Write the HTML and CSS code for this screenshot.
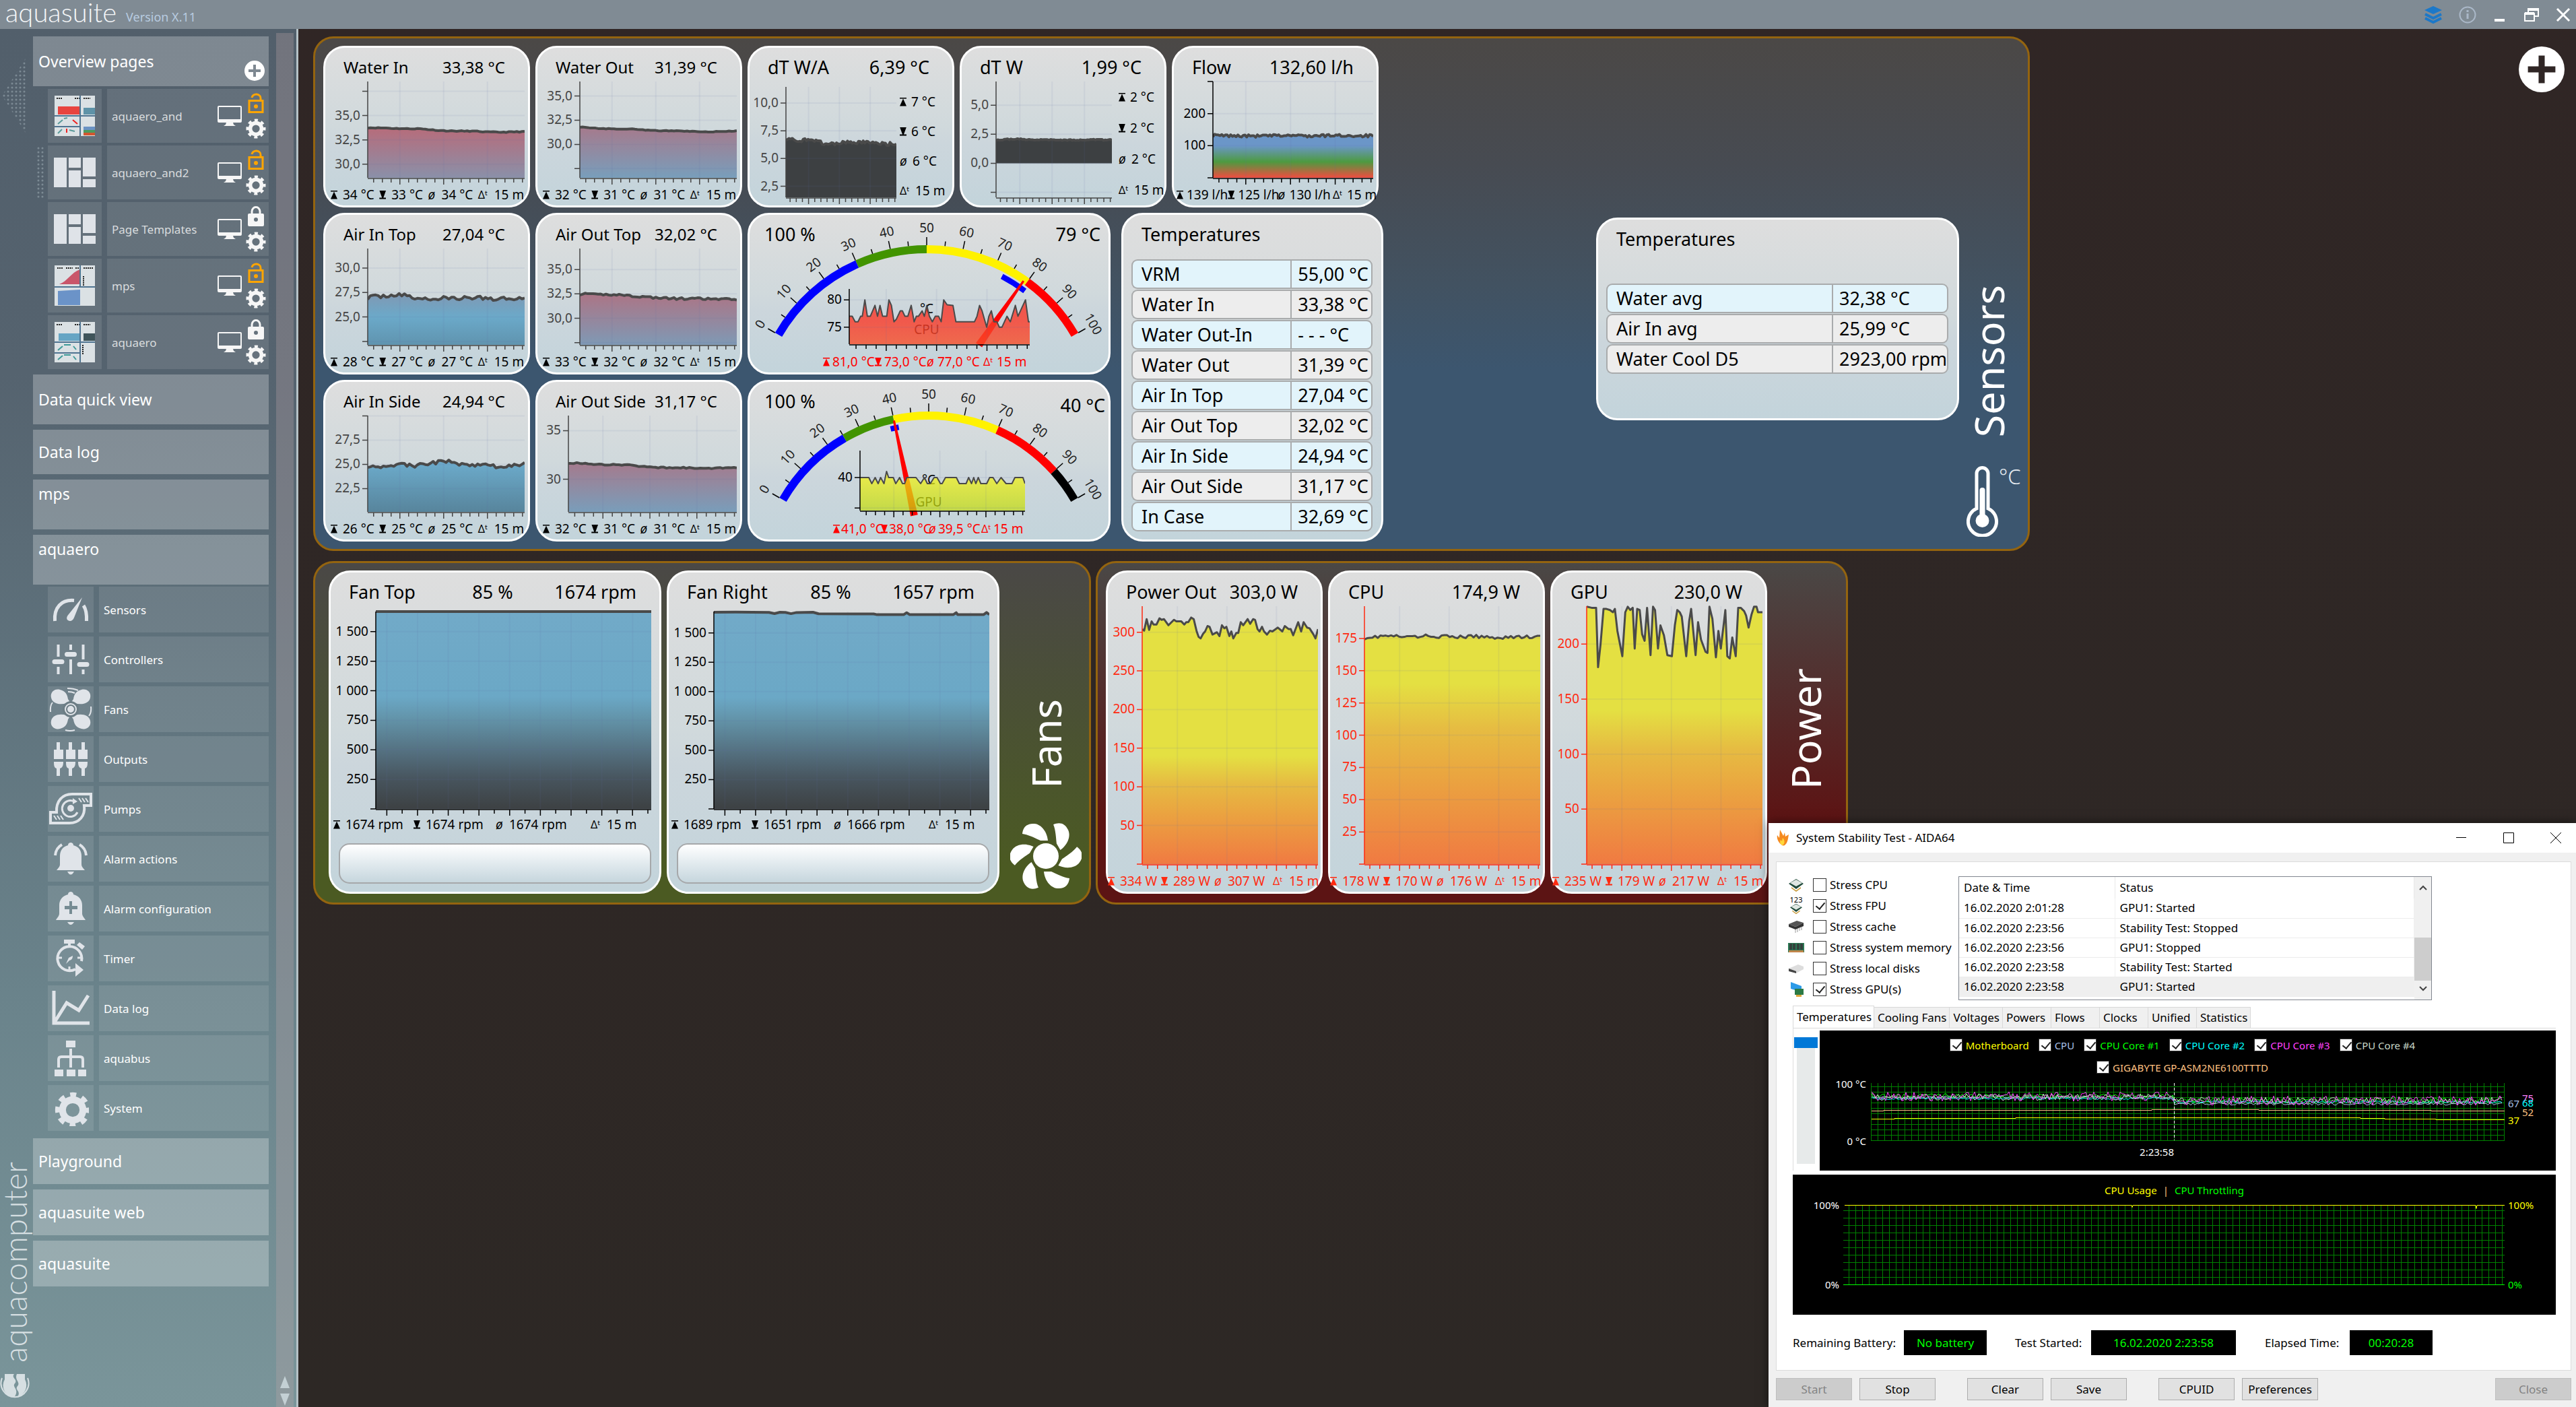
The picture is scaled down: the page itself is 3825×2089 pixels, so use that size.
FILE: index.html
```html
<!DOCTYPE html>
<html lang="en">
<head>
<meta charset="utf-8">
<title>aquasuite</title>
<link rel="stylesheet" href="styles.css">
</head>
<body>
<svg class="defs" aria-hidden="true">
  <defs>
    <pattern id="dots" width="6" height="6" patternUnits="userSpaceOnUse"><circle cx="3" cy="3" r="1.5" fill="#7c8a94"/></pattern>
    <symbol id="i-gear" viewBox="0 0 32 32"><circle cx="16" cy="16" r="9" fill="none" stroke="currentColor" stroke-width="6"/><circle cx="16" cy="16" r="13" fill="none" stroke="currentColor" stroke-width="5" stroke-dasharray="5.2 5.01" stroke-dashoffset="2.6"/></symbol>
    <symbol id="i-monitor" viewBox="0 0 36 30"><path fill="currentColor" fill-rule="evenodd" d="M2 0h32a2 2 0 0 1 2 2v21a2 2 0 0 1-2 2H2a2 2 0 0 1-2-2V2a2 2 0 0 1 2-2zm0 2v18h32V2zM13 25h10l1 3 3 2H9l3-2z"/></symbol>
    <symbol id="i-unlock" viewBox="0 0 24 30"><path fill="none" stroke="currentColor" stroke-width="3" d="M6 7a6.500 5.500 0 0 1 13 1v4M2 11.500h20v17H2z"/><circle cx="12" cy="20" r="3" fill="currentColor"/></symbol>
    <symbol id="i-lock" viewBox="0 0 24 30"><path fill="none" stroke="currentColor" stroke-width="3" d="M6 12V8a6 6.500 0 0 1 12 0v4"/><path fill="currentColor" fill-rule="evenodd" d="M2 11h20a2 2 0 0 1 2 2v15a2 2 0 0 1-2 2H2a2 2 0 0 1-2-2V13a2 2 0 0 1 2-2zm10 6a3 3 0 1 0 0 6 3 3 0 0 0 0-6z"/></symbol>
    <symbol id="i-plus" viewBox="0 0 30 30"><path fill="currentColor" fill-rule="evenodd" d="M15 0a15 15 0 1 0 0 30 15 15 0 0 0 0-30zm-2 6h4v7h7v4h-7v7h-4v-7H6v-4h7z"/></symbol>
    <symbol id="i-pages" viewBox="0 0 62 44"><path fill="#dfe3e8" d="M0 0h19v44H0zM22 0h18v15H22zM22 19h18v25H22zM43 0h19v28H43zM43 32h19v12H43z"/></symbol>
    <symbol id="i-chip" viewBox="0 0 24 22"><path fill="#c79a3a" d="M5 14l7 5 7-5v2l-7 5-7-5z"/><path fill="#1f4a3a" d="M12 2l11 7-11 8L1 9z"/><path fill="#dfe6e2" d="M12 3l9 5-9 5-9-5z"/></symbol>
  </defs>
</svg>

<header class="topbar">
  <span class="logo">aquasuite</span>
  <span class="version">Version X.11</span>
  <div class="top-icons">
    <button type="button" aria-label="Layers"><svg width="28" height="28" viewBox="0 0 28 28"><path fill="#1c78c8" d="M14 1l13 6-13 6L1 7z"/><path fill="none" stroke="#1c78c8" stroke-width="4" d="M2 13l12 6 12-6M2 19l12 6 12-6"/></svg></button>
    <button type="button" aria-label="Information"><svg width="26" height="26" viewBox="0 0 26 26"><circle cx="13" cy="13" r="11.500" fill="none" stroke="#aab8c8" stroke-width="2"/><path stroke="#aab8c8" stroke-width="3" d="M13 11v8M13 6v3"/></svg></button>
    <button type="button" aria-label="Minimize"><svg width="22" height="22" viewBox="0 0 22 22"><path stroke="#fff" stroke-width="4" d="M3 19h15"/></svg></button>
    <button type="button" aria-label="Restore"><svg width="24" height="22" viewBox="0 0 24 22"><path fill="none" stroke="#fff" stroke-width="2" d="M2 9h14v11H2zM7 8V2h15v11h-5"/><path stroke="#fff" stroke-width="4" d="M2 9h14M7 3h15"/></svg></button>
    <button type="button" aria-label="Close"><svg width="22" height="22" viewBox="0 0 22 22"><path stroke="#fff" stroke-width="3" d="M2 2l18 18M20 2L2 20"/></svg></button>
  </div>
</header>

<div class="shell">
  <aside class="sidebar">
    <div class="rail">
      <svg class="rail-arrow" width="36" height="114" viewBox="0 0 36 114"><path fill="url(#dots)" d="M36 0v114L0 57z"/></svg>
      <div class="brand">
        <span class="brand-name">aquacomputer</span>
        <svg width="44" height="44" viewBox="0 0 44 44"><path fill="none" stroke="#d6dfe2" stroke-width="2" d="M3 10a20.500 20.500 0 1 0 38 0"/><path fill="#d6dfe2" d="M7 4h14c-5 6 6 8 1 14s8 8-1 21A18 18 0 0 1 7 12zM25 4h12v8a18 18 0 0 1-11 26c6-9-5-10 0-16s-5-9-1-18z"/></svg>
      </div>
    </div>
    <nav class="nav">
      <section>
        <h2 class="nav-head">Overview pages<button type="button" class="add" aria-label="Add page"><svg width="30" height="30"><use href="#i-plus"/></svg></button></h2>
        <ul class="pages">
          <li><span class="thumb"><svg width="60" height="60" viewBox="0 0 60 60"><path fill="#dbe1e4" d="M0 0h60v60H0z"/><path fill="#e8443f" d="M5 16h33v12H5z"/><path fill="#5f93a8" d="M43 18h17v10H43z"/><path fill="#6b93c4" d="M43 46h17v5H43z"/><path fill="#4d9a5f" d="M43 51h17v4H43z"/><path fill="#d2562f" d="M43 55h17v4H43z"/><path fill="none" stroke="#4f7491" stroke-width="2" d="M38 0v60M0 30h60M0 46h38"/><path fill="none" stroke="#e22" stroke-width="2" d="M27 36l7 6M18 49v6"/><path fill="none" stroke="#5a9a9a" stroke-width="2" d="M5 42l7-6M5 56l6-6M14 34l5-1M22 51l8 2"/><path fill="none" stroke="#222" stroke-width="2" stroke-dasharray="2 1" d="M3 4h9M30 4h7M43 4h10"/></svg></span><a href="#" class="page">aquaero_and</a><span class="tools"><svg class="mon" width="36" height="30"><use href="#i-monitor"/></svg><span class="stack"><svg class="open" width="24" height="30"><use href="#i-unlock"/></svg><svg width="30" height="30"><use href="#i-gear"/></svg></span></span></li>
          <li><svg class="grip" width="12" height="78"><rect width="12" height="78" fill="url(#dots)"/></svg><span class="thumb"><svg width="62" height="44"><use href="#i-pages"/></svg></span><a href="#" class="page">aquaero_and2</a><span class="tools"><svg class="mon" width="36" height="30"><use href="#i-monitor"/></svg><span class="stack"><svg class="open" width="24" height="30"><use href="#i-unlock"/></svg><svg width="30" height="30"><use href="#i-gear"/></svg></span></span></li>
          <li><span class="thumb"><svg width="62" height="44"><use href="#i-pages"/></svg></span><a href="#" class="page">Page Templates</a><span class="tools"><svg class="mon" width="36" height="30"><use href="#i-monitor"/></svg><span class="stack"><svg width="24" height="30"><use href="#i-lock"/></svg><svg width="30" height="30"><use href="#i-gear"/></svg></span></span></li>
          <li><span class="thumb"><svg width="60" height="60" viewBox="0 0 60 60"><path fill="#dbe1e4" d="M0 0h60v60H0z"/><path fill="#c9566a" d="M7 28c12-4 18-18 31-22v22z"/><path fill="#6b93c8" d="M5 38l33-2v23H5z"/><path fill="none" stroke="#4f7491" stroke-width="2" d="M38 0v32M0 32h60"/><path fill="none" stroke="#222" stroke-width="2" stroke-dasharray="2 1" d="M4 4h9M17 4h10M31 4h5M43 4h14M43 16v14"/></svg></span><a href="#" class="page">mps</a><span class="tools"><svg class="mon" width="36" height="30"><use href="#i-monitor"/></svg><span class="stack"><svg class="open" width="24" height="30"><use href="#i-unlock"/></svg><svg width="30" height="30"><use href="#i-gear"/></svg></span></span></li>
          <li><span class="thumb"><svg width="60" height="60" viewBox="0 0 60 60"><path fill="#dbe1e4" d="M0 0h60v60H0z"/><path fill="#66a5c4" d="M6 17h31v11H6z"/><path fill="#3f545a" d="M43 17h17v11H43z"/><path fill="none" stroke="#4f7491" stroke-width="2" d="M38 0v60M0 30h60M0 46h38"/><path fill="none" stroke="#3f9a98" stroke-width="2" d="M5 42l7-6M14 34h10M28 36l4 5M5 56l7-6M14 49h10M28 51l4 5"/><path fill="none" stroke="#222" stroke-width="2" stroke-dasharray="2 1" d="M3 4h9M30 4h7M43 4h10M42 34v14"/></svg></span><a href="#" class="page">aquaero</a><span class="tools"><svg class="mon" width="36" height="30"><use href="#i-monitor"/></svg><span class="stack"><svg width="24" height="30"><use href="#i-lock"/></svg><svg width="30" height="30"><use href="#i-gear"/></svg></span></span></li>
        </ul>
      </section>
      <h2 class="nav-head">Data quick view</h2>
      <h2 class="nav-head short">Data log</h2>
      <h2 class="nav-head top">mps</h2>
      <section>
        <h2 class="nav-head top">aquaero</h2>
        <ul class="items">
          <li><svg viewBox="0 0 68 68"><path fill="none" stroke="currentColor" stroke-width="5" d="M10.500 51C9 31 20 19 39 20.500M53 28c4 6 5 13 4.500 23"/><path fill="currentColor" d="M51 16L39 46c-2 5-6 6-9 4s-2-6 1-9z"/></svg><a href="#">Sensors</a></li>
          <li><svg viewBox="0 0 68 68"><path fill="none" stroke="currentColor" stroke-width="4" d="M15.500 12v18M15.500 45v11M34 12v8M34 34v22M52.500 12v22M52.500 49v7"/><path stroke="currentColor" stroke-width="7" stroke-linecap="round" d="M10 37.500h11M28.500 26.500h11M47 41.500h11"/></svg><a href="#">Controllers</a></li>
          <li><svg viewBox="0 0 68 68"><g fill="currentColor"><path d="M34 34L28 25C18 28 7 26 5 17 3 8 11 3 18 5c9 2 11 8 12 14l6 9z"/><path d="M34 34l6-9c10 3 21 1 23-8 2-9-6-14-13-12-9 2-11 8-12 14l-6 9z"/><path d="M34 34l-6 9c-10-3-21-1-23 8-2 9 6 14 13 12 9-2 11-8 12-14l6-9z"/><path d="M34 34l6 9c10-3 21-1 23 8 2 9-6 14-13 12-9-2-11-8-12-14l-6-9z"/></g><circle cx="34" cy="34" r="12" fill="#6c7d85"/><circle cx="34" cy="34" r="8" fill="none" stroke="currentColor" stroke-width="2"/><circle cx="34" cy="34" r="5" fill="currentColor"/><path fill="none" stroke="currentColor" stroke-width="2" d="M29 3q9 0 16 3M30 8q6 0 10 2M26 65q7 2 14 0M4 38q-1-9 3-14M64 30q1 9-3 14"/></svg><a href="#">Fans</a></li>
          <li><svg viewBox="0 0 68 68"><path fill="currentColor" d="M13 9h5v11h5v14H9V20h4zM31 9h5v11h5v14H27V20h4zM50 9h5v11h4v14H45V20h5zM9 38h14c0 7-2 9-5 10v11h-5V48c-3-1-4-3-4-10zM27 38h14c0 7-2 9-5 10v11h-5V48c-3-1-4-3-4-10zM45 38h14c0 7-1 9-4 10v11h-5V48c-3-1-5-3-5-10z"/></svg><a href="#">Outputs</a></li>
          <li><svg viewBox="0 0 68 68"><path fill="none" stroke="currentColor" stroke-width="4" d="M4 55V39h9C12 22 22 12 36 12h28v17H54C56 45 46 55 32 55z"/><path fill="none" stroke="currentColor" stroke-width="3" d="M44 39a12 12 0 1 1-5-16"/><path fill="currentColor" d="M37 18l7 5-7 4z"/><circle cx="34" cy="33" r="5" fill="currentColor"/><path stroke="currentColor" stroke-width="2" d="M46 18l4 6M51 18l4 6M56 18l4 6M9 44l4 6M14 44l4 6M19 44l4 6"/></svg><a href="#">Pumps</a></li>
          <li><svg viewBox="0 0 68 68"><path fill="currentColor" d="M34 10c2 0 4 1 4 4 8 2 12 8 12 16v12c0 4 2 5 5 9H13c3-4 5-5 5-9V30c0-8 4-14 12-16 0-3 2-4 4-4zM29 53h10q-5 9-10 0z"/><path fill="none" stroke="currentColor" stroke-width="4" d="M11 29q1-11 10-16M57 29q-1-11-10-16"/></svg><a href="#">Alarm actions</a></li>
          <li><svg viewBox="0 0 68 68"><path fill="currentColor" fill-rule="evenodd" d="M34 9c2 0 4 1 4 4 8 2 13 8 13 16v12c0 4 2 5 5 10H12c3-5 5-6 5-10V29c0-8 5-14 13-16 0-3 2-4 4-4zm-2 14v7h-7v5h7v7h4v-7h8v-5h-8v-7zM29 54h10q-5 8-10 0z"/></svg><a href="#">Alarm configuration</a></li>
          <li><svg viewBox="0 0 68 68"><path fill="none" stroke="currentColor" stroke-width="4" d="M41 50A18 18 0 1 1 50 38"/><path fill="currentColor" d="M24 6h16v6h-6v6h-4v-6h-6zM43 14l4-4 8 6-4 5zM41 41l12 10-12 10zM27 42l4-9 6-3q0 6-5 7z"/><path stroke="currentColor" stroke-width="3" d="M15 33h6M44 33h6M32 46v5"/></svg><a href="#">Timer</a></li>
          <li><svg viewBox="0 0 68 68"><path fill="none" stroke="currentColor" stroke-width="5" d="M9 8v48h53M11 53l17-27 18 11 14-22"/></svg><a href="#">Data log</a></li>
          <li><svg viewBox="0 0 68 68"><path fill="currentColor" d="M27 8h14v10H27zM10 51h13v10H10zM28 51h13v10H28zM45 51h12v10H45z"/><path fill="none" stroke="currentColor" stroke-width="4" d="M34 20v28M16 48V36q0-4 4-4h28q4 0 4 4v12"/></svg><a href="#">aquabus</a></li>
          <li><svg viewBox="-2 -2 36 36" class="gear"><use href="#i-gear"/></svg><a href="#">System</a></li>
        </ul>
      </section>
      <h2 class="nav-head low">Playground</h2>
      <h2 class="nav-head low">aquasuite web</h2>
      <h2 class="nav-head low">aquasuite</h2>
    </nav>
    <div class="scroller"><svg width="14" height="44" viewBox="0 0 14 44"><path fill="#c3d0d4" d="M7 0l7 18H0zM0 26h14L7 44z"/></svg></div>
  </aside>

  <main class="board">
    <button type="button" class="add-big" aria-label="Add element"><svg width="68" height="68"><use href="#i-plus"/></svg></button>

    <div class="row row-one">
      <section class="panel sensors">
        <div class="pairs">
          <article class="card"><header><h3>Water In</h3><b>33,38 °C</b></header><div class="chart" data-chart="waterIn"></div><ul class="stats"><li class="max">34 °C</li><li class="min">33 °C</li><li class="avg">34 °C</li><li class="dt">15 m</li></ul></article>
          <article class="card"><header><h3>Water Out</h3><b>31,39 °C</b></header><div class="chart" data-chart="waterOut"></div><ul class="stats"><li class="max">32 °C</li><li class="min">31 °C</li><li class="avg">31 °C</li><li class="dt">15 m</li></ul></article>
          <article class="card"><header><h3>Air In Top</h3><b>27,04 °C</b></header><div class="chart" data-chart="airInTop"></div><ul class="stats"><li class="max">28 °C</li><li class="min">27 °C</li><li class="avg">27 °C</li><li class="dt">15 m</li></ul></article>
          <article class="card"><header><h3>Air Out Top</h3><b>32,02 °C</b></header><div class="chart" data-chart="airOutTop"></div><ul class="stats"><li class="max">33 °C</li><li class="min">32 °C</li><li class="avg">32 °C</li><li class="dt">15 m</li></ul></article>
          <article class="card"><header><h3>Air In Side</h3><b>24,94 °C</b></header><div class="chart" data-chart="airInSide"></div><ul class="stats"><li class="max">26 °C</li><li class="min">25 °C</li><li class="avg">25 °C</li><li class="dt">15 m</li></ul></article>
          <article class="card"><header><h3>Air Out Side</h3><b>31,17 °C</b></header><div class="chart" data-chart="airOutSide"></div><ul class="stats"><li class="max">32 °C</li><li class="min">31 °C</li><li class="avg">31 °C</li><li class="dt">15 m</li></ul></article>
        </div>
        <div class="center">
          <div class="trio">
            <article class="card big"><header><h3>dT W/A</h3><b>6,39 °C</b></header><div class="split"><div class="chart" data-chart="dtWA"></div><ul class="stats side wide"><li class="max">7 °C</li><li class="min">6 °C</li><li class="avg">6 °C</li><li class="dt">15 m</li></ul></div></article>
            <article class="card big"><header><h3>dT W</h3><b>1,99 °C</b></header><div class="split"><div class="chart" data-chart="dtW"></div><ul class="stats side"><li class="max">2 °C</li><li class="min">2 °C</li><li class="avg">2 °C</li><li class="dt">15 m</li></ul></div></article>
            <article class="card big"><header><h3>Flow</h3><b>132,60 l/h</b></header><div class="chart" data-chart="flow"></div><ul class="stats tight"><li class="max">139 l/h</li><li class="min">125 l/h</li><li class="avg">130 l/h</li><li class="dt">15 m</li></ul></article>
          </div>
          <div class="lower">
            <div class="gauges">
              <article class="card big gauge"><header><b>100 %</b><b>79 °C</b></header><div class="dial" data-gauge="cpu"></div><ul class="stats red"><li class="max">81,0 °C</li><li class="min">73,0 °C</li><li class="avg">77,0 °C</li><li class="dt">15 m</li></ul></article>
              <article class="card big gauge second"><header><b>100 %</b><b class="reading">40 °C</b></header><div class="dial" data-gauge="gpu"></div><ul class="stats red narrow"><li class="max">41,0 °C</li><li class="min">38,0 °C</li><li class="avg">39,5 °C</li><li class="dt">15 m</li></ul></article>
            </div>
            <article class="card big"><header><h3>Temperatures</h3></header>
              <table class="temps">
                <tr class="hl"><th scope="row">VRM</th><td>55,00 °C</td></tr>
                <tr><th scope="row">Water In</th><td>33,38 °C</td></tr>
                <tr class="hl"><th scope="row">Water Out-In</th><td>- - - °C</td></tr>
                <tr><th scope="row">Water Out</th><td>31,39 °C</td></tr>
                <tr class="hl"><th scope="row">Air In Top</th><td>27,04 °C</td></tr>
                <tr><th scope="row">Air Out Top</th><td>32,02 °C</td></tr>
                <tr class="hl"><th scope="row">Air In Side</th><td>24,94 °C</td></tr>
                <tr><th scope="row">Air Out Side</th><td>31,17 °C</td></tr>
                <tr class="hl"><th scope="row">In Case</th><td>32,69 °C</td></tr>
              </table>
            </article>
          </div>
        </div>
        <article class="card big averages"><header><h3>Temperatures</h3></header>
          <table class="temps">
            <tr class="hl"><th scope="row">Water avg</th><td>32,38 °C</td></tr>
            <tr><th scope="row">Air In avg</th><td>25,99 °C</td></tr>
            <tr><th scope="row">Water Cool D5</th><td>2923,00 rpm</td></tr>
          </table>
        </article>
        <div class="label-col">
          <h2>Sensors</h2>
          <div class="thermo"><svg width="48" height="106" viewBox="0 0 48 106"><path fill="none" stroke="#fff" stroke-width="5" d="M15 64V12a8.500 8.500 0 0 1 17 0v52a21 21 0 1 1-17 0z"/><path stroke="#fff" stroke-width="8" stroke-linecap="round" d="M23.500 37v42"/><circle cx="23.500" cy="82" r="10" fill="#fff"/></svg><span>°C</span></div>
        </div>
      </section>
    </div>

    <div class="row row-two">
      <section class="panel fans">
        <article class="card big"><header class="three"><h3>Fan Top</h3><b>85 %</b><b>1674 rpm</b></header><div class="chart" data-chart="fanTop"></div><ul class="stats rpm"><li class="max">1674 rpm</li><li class="min">1674 rpm</li><li class="avg">1674 rpm</li><li class="dt">15 m</li></ul><div class="readout"></div></article>
        <article class="card big"><header class="three"><h3>Fan Right</h3><b>85 %</b><b>1657 rpm</b></header><div class="chart" data-chart="fanRight"></div><ul class="stats rpm"><li class="max">1689 rpm</li><li class="min">1651 rpm</li><li class="avg">1666 rpm</li><li class="dt">15 m</li></ul><div class="readout"></div></article>
        <div class="label-col">
          <h2>Fans</h2>
          <svg width="106" height="98" viewBox="-53 -49 106 98" fill="#fff"><circle r="19"/><path id="blade" d="M-8-23C-15-26-26-32-35-33-34-43-28-49-17-48-6-47 2-35 3-23z"/><use href="#blade" transform="rotate(60)"/><use href="#blade" transform="rotate(120)"/><use href="#blade" transform="rotate(180)"/><use href="#blade" transform="rotate(240)"/><use href="#blade" transform="rotate(300)"/></svg>
        </div>
      </section>
      <section class="panel power">
        <article class="card big"><header><h3>Power Out</h3><b>303,0 W</b></header><div class="chart" data-chart="powerOut"></div><ul class="stats watt"><li class="max">334 W</li><li class="min">289 W</li><li class="avg">307 W</li><li class="dt">15 m</li></ul></article>
        <article class="card big"><header><h3>CPU</h3><b>174,9 W</b></header><div class="chart" data-chart="powerCpu"></div><ul class="stats watt"><li class="max">178 W</li><li class="min">170 W</li><li class="avg">176 W</li><li class="dt">15 m</li></ul></article>
        <article class="card big"><header><h3>GPU</h3><b>230,0 W</b></header><div class="chart" data-chart="powerGpu"></div><ul class="stats watt"><li class="max">235 W</li><li class="min">179 W</li><li class="avg">217 W</li><li class="dt">15 m</li></ul></article>
        <div class="label-col"><h2>Power</h2></div>
      </section>
    </div>
  </main>
</div>

<div class="window" role="dialog" aria-label="System Stability Test">
  <div class="titlebar">
    <svg width="20" height="24" viewBox="0 0 20 24"><path fill="#f58a1f" d="M5 0c3 5 4 7 5 9l2-5 1 6 5-3c-1 5-1 11-5 15q-3 3-6 0C2 18 0 13 1 8l3 4z"/><path fill="#ffd83a" d="M9 12c3 3 4 8 0 11-5-2-4-6-3-8l2 2z"/></svg>
    <span>System Stability Test - AIDA64</span>
    <div class="win-controls">
      <button type="button" aria-label="Minimize"><svg width="16" height="16"><path stroke="#000" d="M0 7.500h15"/></svg></button>
      <button type="button" aria-label="Maximize"><svg width="16" height="16"><path fill="none" stroke="#000" d="M.5.5h15v15H.5z"/></svg></button>
      <button type="button" aria-label="Close window"><svg width="16" height="16"><path stroke="#000" d="M0 0l16 16M16 0L0 16"/></svg></button>
    </div>
  </div>
  <div class="win-body">
    <div class="sheet">
      <div class="upper">
        <ul class="stress">
          <li><svg width="24" height="22"><use href="#i-chip"/></svg><input type="checkbox" id="s1"><label for="s1">Stress CPU</label></li>
          <li><span class="fpu"><small>123</small><svg width="24" height="18"><use href="#i-chip"/></svg></span><input type="checkbox" id="s2" checked><label for="s2">Stress FPU</label></li>
          <li><svg width="24" height="22" viewBox="0 0 24 22"><path fill="#555" d="M1 7l12-5 10 3-12 6z"/><path fill="#333" d="M1 7l10 4 12-6v5l-12 5-10-4z"/><path stroke="#999" d="M11 15v5M14 14v5M17 12v5M20 11v5"/></svg><input type="checkbox" id="s3"><label for="s3">Stress cache</label></li>
          <li><svg width="24" height="22" viewBox="0 0 24 22"><path fill="#2c7a55" d="M0 4h24v14H0z"/><path fill="#c0854a" d="M1 15h22v3H1z"/><path fill="#33413c" d="M2 5h4v9H2zM7 5h4v9H7zM13 5h4v9h-4zM18 5h4v9h-4z"/></svg><input type="checkbox" id="s4"><label for="s4">Stress system memory</label></li>
          <li><svg width="24" height="22" viewBox="0 0 24 22"><path fill="#ddd" d="M1 11l14-6 8 3v4l-11 6z"/><path fill="#444" d="M1 11l11 4v3L1 15z"/></svg><input type="checkbox" id="s5"><label for="s5">Stress local disks</label></li>
          <li><svg width="24" height="22" viewBox="0 0 24 22"><path fill="#2d9be8" d="M4 0l16 6v9L4 10z"/><path fill="#2c7a45" d="M10 10h13v9H10z"/><path fill="#e0a83a" d="M12 19h8v3h-8z"/></svg><input type="checkbox" id="s6" checked><label for="s6">Stress GPU(s)</label></li>
        </ul>
        <div class="log">
          <table>
            <thead><tr><th>Date &amp; Time</th><th>Status</th></tr></thead>
            <tbody>
              <tr><td>16.02.2020 2:01:28</td><td>GPU1: Started</td></tr>
              <tr><td>16.02.2020 2:23:56</td><td>Stability Test: Stopped</td></tr>
              <tr><td>16.02.2020 2:23:56</td><td>GPU1: Stopped</td></tr>
              <tr><td>16.02.2020 2:23:58</td><td>Stability Test: Started</td></tr>
              <tr class="sel"><td>16.02.2020 2:23:58</td><td>GPU1: Started</td></tr>
            </tbody>
          </table>
          <div class="bar"><svg width="12" height="8"><path fill="none" stroke="#444" stroke-width="2" d="M1 7l5-5 5 5"/></svg><i></i><svg width="12" height="8"><path fill="none" stroke="#444" stroke-width="2" d="M1 1l5 5 5-5"/></svg></div>
        </div>
      </div>
      <div class="tabs" role="tablist">
        <button type="button" role="tab" aria-selected="true">Temperatures</button><button type="button" role="tab">Cooling Fans</button><button type="button" role="tab">Voltages</button><button type="button" role="tab">Powers</button><button type="button" role="tab">Flows</button><button type="button" role="tab">Clocks</button><button type="button" role="tab">Unified</button><button type="button" role="tab">Statistics</button>
      </div>
      <div class="tab-page">
        <input type="range" class="vslider" min="0" max="100" value="0" aria-label="Scale">
        <div class="scope" data-scope="temps">
          <div class="legend">
            <label class="c-mb"><input type="checkbox" checked>Motherboard</label>
            <label class="c-cpu"><input type="checkbox" checked>CPU</label>
            <label class="c-1"><input type="checkbox" checked>CPU Core #1</label>
            <label class="c-2"><input type="checkbox" checked>CPU Core #2</label>
            <label class="c-3"><input type="checkbox" checked>CPU Core #3</label>
            <label class="c-4"><input type="checkbox" checked>CPU Core #4</label>
          </div>
          <div class="legend"><label class="c-ssd"><input type="checkbox" checked>GIGABYTE GP-ASM2NE6100TTTD</label></div>
        </div>
      </div>
      <div class="scope usage" data-scope="usage">
        <p><span class="c-mb">CPU Usage</span><span class="c-ssd">|</span><span class="c-thr">CPU Throttling</span></p>
      </div>
      <div class="status">
        <span>Remaining Battery:</span><output>No battery</output>
        <span>Test Started:</span><output class="long">16.02.2020 2:23:58</output>
        <span>Elapsed Time:</span><output>00:20:28</output>
      </div>
    </div>
    <div class="buttons">
      <button type="button" disabled>Start</button><button type="button">Stop</button><button type="button" class="sep">Clear</button><button type="button">Save</button><button type="button" class="sep">CPUID</button><button type="button">Preferences</button><button type="button" class="end" disabled>Close</button>
    </div>
  </div>
</div>
<script src="charts.js"></script>
</body>
</html>
```
FILE: styles.css
```css
* { box-sizing: border-box; }
html, body { margin: 0; }
body {
  position: relative;
  display: flex;
  flex-direction: column;
  min-height: 100vh;
  overflow: hidden;
  background: linear-gradient(#302625, #2d2825);
  font-family: "Noto Sans", "Open Sans", sans-serif;
  color: #fff;
}
h2, h3, p, ul { margin: 0; padding: 0; font-weight: 400; }
ul { list-style: none; }
b { font-weight: 400; }
a { color: inherit; text-decoration: none; }
svg { display: block; }
button { padding: 0; border: 0; background: none; color: inherit; font: inherit; }
.defs { position: absolute; width: 0; height: 0; }

/* Title bar */
.topbar { display: flex; align-items: center; height: 43px; padding: 0 8px; background: #808b94; }
.logo { margin-bottom: 8px; font: 300 40px/40px Lato, sans-serif; color: #f4f6f8; }
.version { margin: 6px 0 0 14px; font-size: 18px; color: #b8cbe0; }
.top-icons { display: flex; align-items: center; gap: 24px; margin-left: auto; }

/* Sidebar */
.shell { display: flex; flex: 1; }
.sidebar { display: flex; width: 443px; border-right: 3px solid #b6c2c7; background: linear-gradient(#525f6b, #55636f 25%, #6a838b 70%, #7a959a); }
.rail { display: flex; flex-direction: column; justify-content: space-between; width: 49px; padding: 42px 0 9px; }
.rail-arrow { margin-left: 3px; }
.brand { display: flex; flex-direction: column; align-items: center; gap: 13px; width: 44px; }
.brand-name { writing-mode: vertical-rl; transform: rotate(180deg); font: 300 48px/44px Lato, sans-serif; color: #d6dfe2; }
.nav { display: flex; flex-direction: column; gap: 8px; width: 350px; padding-top: 11px; }
.nav-head { display: flex; align-items: center; justify-content: space-between; height: 74px; padding: 0 6px 0 8px; background: rgba(255, 255, 255, .26); font-size: 23px; }
.nav-head.short { height: 66px; }
.nav-head.low { height: 68px; }
.nav-head.top { align-items: flex-start; padding-top: 5px; }
.add { align-self: flex-end; margin-bottom: 8px; }
.pages { display: flex; flex-direction: column; gap: 4px; padding: 4px 0 0 22px; }
.pages li { position: relative; display: flex; height: 80px; font-size: 17px; color: #d9dcde; }
.grip { position: absolute; left: -17px; top: 1px; }
.thumb { display: grid; place-items: center; width: 80px; margin-right: 8px; background: rgba(255, 255, 255, .1); }
.page { display: flex; align-items: center; flex: 1; padding-left: 7px; background: rgba(255, 255, 255, .1); }
.tools { display: flex; align-items: center; gap: 6px; padding-right: 4px; background: rgba(255, 255, 255, .1); color: #f6f6f6; }
.stack { display: flex; flex-direction: column; align-items: center; gap: 8px; }
.open { color: #ffa500; }
.items { display: flex; flex-direction: column; gap: 6px; padding: 3px 0 3px 22px; }
.items li { display: flex; gap: 8px; height: 68px; color: #e0e4e9; }
.items svg { flex: none; width: 68px; height: 68px; background: rgba(255, 255, 255, .1); }
.items .gear { padding: 7px; }
.items a { display: flex; align-items: center; flex: 1; padding-left: 7px; background: rgba(255, 255, 255, .1); font-size: 17px; color: #fff; }
.scroller { display: flex; align-items: flex-end; justify-content: center; width: 26px; margin: 6px 4px 0 11px; padding-bottom: 2px; background: rgba(190, 165, 170, .3); }

/* Dashboard */
.board { position: relative; flex: 1; padding: 11px 22px 0; }
.add-big { position: absolute; top: 26px; right: 17px; }
.row { display: grid; gap: 7px; }
.row-one { grid-template-columns: minmax(0, 2549fr) minmax(0, 782fr); }
.row-two { grid-template-columns: minmax(0, 1155fr) minmax(0, 1117fr) minmax(0, 1052fr); margin-top: 15px; }
.panel { display: grid; gap: 8px; border: 3px solid #94640f; border-radius: 30px; padding: 11px 12px; }
.sensors { grid-template-columns: minmax(0, 622fr) minmax(0, 944fr) minmax(0, 300fr) minmax(0, 539fr) minmax(0, 94fr); padding-right: 0; background: linear-gradient(#4b4846, #474b52 25%, #425261 48%, #3c566f 65%); }
.pairs, .trio, .gauges { display: grid; grid-auto-rows: 240px; gap: 8px; }
.pairs { grid-template-columns: 1fr 1fr; }
.center { display: flex; flex-direction: column; gap: 8px; }
.trio { grid-template-columns: 1fr 1fr 1fr; padding-right: 7px; }
.lower { display: grid; grid-template-columns: minmax(0, 539fr) minmax(0, 389fr); gap: 16px; flex: 1; }
.averages { grid-column: 4; height: 301px; margin-top: 255px; }
.fans { grid-template-columns: minmax(0, 494fr) minmax(0, 494fr) minmax(0, 121fr); padding: 11px 4px 13px 20px; min-height: 510px; background: linear-gradient(#4a4846, #4b5a22 90%); }
.power { grid-template-columns: minmax(0, 322fr) minmax(0, 322fr) minmax(0, 322fr) minmax(0, 97fr); padding-bottom: 13px; background: linear-gradient(#4a4846, #5c1414 75%); }
.label-col { display: flex; flex-direction: column; align-items: center; justify-content: flex-end; }
.label-col h2 { writing-mode: vertical-rl; transform: rotate(180deg); font-size: 61px; line-height: 72px; }
.sensors .label-col { grid-column: 5; align-items: flex-start; padding-bottom: 7px; }
.sensors h2 { margin-bottom: 42px; }
.fans .label-col { padding-bottom: 7px; }
.fans h2 { margin-bottom: 51px; }
.power .label-col { padding-bottom: 155px; }
.thermo { display: flex; align-items: flex-start; margin-left: 3px; }
.thermo span { font-size: 31px; line-height: 32px; font-weight: 300; color: #e6ebf0; }

.card { position: relative; display: flex; flex-direction: column; border: 3px solid #fff; border-radius: 32px; background: linear-gradient(#dedede, #d0d9dc 50%, #ccd6dc 60%, #c3d4db); color: #000; }
.card header { display: flex; align-items: center; justify-content: space-between; height: 50px; padding: 8px 34px 0 27px; font-size: 24px; line-height: 32px; white-space: nowrap; }
.card h3 { font-size: inherit; }
.card.big header { font-size: 27px; }
.card header.three { display: grid; grid-template-columns: 1fr auto 1fr; }
.three b:last-child { text-align: right; }
.chart { flex: 1; min-height: 0; }
.chart svg, .dial svg { overflow: visible; }
.axis { font-size: 19px; }
.split { display: flex; flex: 1; }
.stats { display: grid; grid-template-columns: 73fr 73fr 75fr 75fr; height: 29px; padding: 0 0 3px 8px; font-size: 19px; line-height: 26px; white-space: nowrap; }
.stats li { display: flex; align-items: center; gap: 8px; min-width: 0; }
.stats li::before { flex: none; width: 10px; height: 13px; background: currentColor; content: ""; }
.stats .max::before { clip-path: polygon(0 0, 100% 0, 100% 15%, 50% 15%, 100% 100%, 0 100%, 50% 15%, 0 15%); }
.stats .min::before { clip-path: polygon(0 0, 100% 0, 60% 85%, 100% 85%, 100% 100%, 0 100%, 0 85%, 40% 85%); }
.stats .avg::before { width: 12px; height: auto; background: none; content: "ø"; font-style: italic; }
.stats .dt::before { width: 16px; height: auto; background: none; content: "Δᵗ"; font-size: 16px; }
.stats.side { width: 68px; height: auto; grid-template-columns: 1fr; padding: 0; }
.stats.wide { width: 78px; padding-top: 8px; }
.side li { gap: 7px; }
.stats.tight { grid-template-columns: 75fr 73fr 80fr 64fr; padding-left: 4px; }
.tight li { gap: 5px; }
.stats.red { grid-template-columns: 77fr 77fr 84fr 69fr; margin-top: auto; padding: 0 117px 3px 109px; color: #f00; }
.red li { gap: 4px; }
.stats.narrow { grid-template-columns: 71fr 71fr 78fr 65fr; padding: 0 124px 3px; }
.narrow li { gap: 2px; }
.stats.rpm { grid-template-columns: 119fr 122fr 141fr 102fr; height: 26px; padding: 0 0 0 4px; }
.stats.watt { grid-template-columns: 79fr 79fr 87fr 71fr; padding-left: 0; color: #ff2a10; }
.readout { height: 60px; margin: 15px 12px 12px; border: 2px solid #a6a8aa; border-radius: 16px; background: linear-gradient(#fff, #dce6eb 60%, #c6d6dd); }
.gauge .dial { position: absolute; inset: 0; }
.card.gauge header { padding: 8px 12px 0 22px; }
.card.second header { padding-right: 5px; }
.reading { padding-top: 12px; }

.temps { margin: 15px 13px 0 12px; border-collapse: separate; border-spacing: 0 1px; table-layout: fixed; font-size: 27px; line-height: 40px; }
.averages .temps { margin-top: 44px; }
.temps th, .temps td { height: 44px; padding: 0; border: 2px solid #a9abac; background: #ededed; text-align: left; font-weight: 400; white-space: nowrap; }
.temps th { padding-left: 13px; border-right: 0; border-radius: 9px 0 0 9px; }
.temps td { width: 34%; padding-left: 9px; border-radius: 0 9px 9px 0; }
.temps .hl th, .temps .hl td { background: #e2f4fb; }

/* Stability test window */
.window { position: absolute; right: 0; bottom: 0; width: 1199px; background: #f0f0f0; color: #000; font-size: 17px; line-height: 22px; box-shadow: 0 0 14px rgba(0, 0, 0, .6); }
.titlebar { display: flex; align-items: center; gap: 9px; height: 44px; padding: 0 22px 0 12px; background: #fff; }
.win-controls { display: flex; gap: 54px; margin-left: auto; }
.win-body { padding: 13px 7px 10px 11px; }
.sheet { height: 756px; padding: 18px 22px 0 17px; border: 1px solid #dcdcdc; background: #fff; }
.upper { display: flex; }
.stress { width: 253px; white-space: nowrap; }
.stress li { display: flex; align-items: center; height: 31px; }
.stress input { margin: 0 5px 0 13px; }
.fpu small { display: block; font-size: 11px; line-height: 8px; text-align: center; }
input[type=checkbox] { appearance: none; flex: none; width: 20px; height: 20px; border: 1px solid #333; background: #fff; }
input[type=checkbox]:checked::before { content: ""; display: block; width: 6px; height: 11px; margin: 1px 0 0 6px; border: solid #222; border-width: 0 2px 2px 0; transform: rotate(40deg); }
.log { display: flex; width: 703px; height: 184px; margin-top: 3px; border: 1px solid #828790; }
.log table { flex: 1; border-collapse: collapse; table-layout: fixed; align-self: flex-start; }
.log th { height: 32px; padding: 0 7px; text-align: left; font-weight: 400; border-right: 1px solid #e8e8e8; }
.log th:first-child { width: 231px; }
.log td { height: 29px; padding: 0 7px; border-right: 1px solid #f0f0f0; border-bottom: 1px solid #ececec; }
.log .sel { background: #efefef; }
.bar { display: flex; flex-direction: column; align-items: center; width: 25px; padding: 12px 0; background: #f0f0f0; }
.bar i { width: 25px; height: 64px; margin: 70px 0 auto; background: #cdcdcd; }
.tabs { display: flex; align-items: flex-end; margin: 8px 0 0 7px; }
.tabs button { height: 31px; min-width: 72px; padding: 0 4px 0 5px; border: 1px solid #d9d9d9; border-width: 1px 1px 0 0; background: #f0f0f0; text-align: left; }
.tabs [aria-selected] { height: 33px; width: 121px; padding: 0 5px; border-left-width: 1px; background: #fff; }
.tab-page { display: flex; gap: 2px; margin-left: 7px; padding-top: 3px; border: 1px solid #dcdcdc; border-width: 1px 0 0 1px; }
.vslider { appearance: none; writing-mode: vertical-lr; width: 37px; height: 188px; margin: 10px 0 0; background: linear-gradient(#e7eaea, #e7eaea) 5px 0 / 27px 100% no-repeat; }
.vslider::-webkit-slider-thumb { appearance: none; width: 35px; height: 16px; background: #0078d7; }
.scope { position: relative; flex: 1; height: 208px; padding-top: 5px; background: #000; color: #fff; }
.scope > svg { position: absolute; inset: 0; }
.scope text { font-size: 15px; }
.legend { position: relative; display: flex; justify-content: center; gap: 14px; height: 33px; padding-right: 16px; font-size: 15px; }
.legend label { display: flex; align-items: center; gap: 5px; }
.legend input { width: 19px; height: 19px; margin: 0; }
.c-mb { color: #ff0; }
.c-cpu { color: #a8c0e8; }
.c-1 { color: #0f0; }
.c-2 { color: #0ff; }
.c-3 { color: #ff40ff; }
.c-4 { color: #c8d8c8; }
.c-ssd { color: #ffc080; }
.c-thr { color: #0f0; }
.usage { margin: 6px 0 0 7px; padding-top: 12px; }
.usage p { position: relative; display: flex; justify-content: center; gap: 9px; font-size: 15px; }
.status { display: grid; grid-template-columns: 165px 165px 113px 258px 126px 123px; align-items: center; margin: 23px 0 0 7px; }
.status output { width: 123px; height: 37px; background: #000; color: #0f0; line-height: 37px; text-align: center; }
.status .long { width: 215px; }
.buttons { display: flex; gap: 11px; margin-top: 11px; }
.buttons button { width: 113px; height: 33px; border: 1px solid #adadad; background: #e1e1e1; }
.buttons .sep { margin-left: 36px; }
.buttons .end { margin-left: auto; }
.buttons button:disabled { border-color: #bfbfbf; background: #ccc; color: #838383; }
```
FILE: charts.js
```js
const NS = 'http://www.w3.org/2000/svg';
const add = (parent, tag, attrs, text) => {
  const el = document.createElementNS(NS, tag);
  for (const k in attrs) el.setAttribute(k, attrs[k]);
  if (text !== undefined) el.textContent = text;
  parent.appendChild(el);
  return el;
};

// Small repeatable random source for sensor jitter
const seeded = s => () => (s = (s * 16807) % 2147483647) / 2147483647 - 0.5;
const jitter = (knots, amp, n, seed) => {
  const r = seeded(seed), out = [];
  for (let i = 0; i <= n; i++) {
    const t = i / n * (knots.length - 1), k = Math.min(knots.length - 2, Math.floor(t));
    out.push([i / n, knots[k] + (knots[k + 1] - knots[k]) * (t - k) + r() * amp]);
  }
  return out;
};
const pairs = (flat, span) => {
  const out = [];
  for (let i = 0; i < flat.length; i += 2) out.push([flat[i] / span, flat[i + 1]]);
  return out;
};

const HEAT = [[20, '#57849b'], [25, '#6ba9c9'], [34, '#b96a78']];
const FAN = [[0, '#3d4143'], [250, '#47545d'], [500, '#557282'], [750, '#6292a7'], [950, '#6ba8c6'], [1700, '#72aac8']];
const WATT = [[0, '#f07a42'], [70, '#eaa640'], [105, '#e6bc42'], [140, '#e4e042']];
const small = { l: 63, r: 5, t: 0, b: 12, color: '#444', fills: HEAT, major: 0.205, step: 0.279, minor: 5, line: 4 };
const watt = { l: 51, r: 4, t: 0, b: 12, color: '#ff2a10', fills: WATT, major: 0.2, step: 0.282, minor: 5, line: 3 };
const fan = { l: 67, r: 12, t: 8, b: 10, color: '#000', fills: FAN, major: 0.04, step: 0.1115, minor: 2, line: 4 };

const charts = {
  waterIn: { ...small, min: 28.6, max: 38.5, ticks: { 37.5: '', 35: '35,0', 32.5: '32,5', 30: '30,0' }, data: jitter([33.75, 33.72, 33.65, 33.65, 33.48, 33.4, 33.4, 33.3, 33.3, 33.35], 0.08, 60, 11) },
  waterOut: { ...small, min: 26.55, max: 36.5, ticks: { 35: '35,0', 32.5: '32,5', 30: '30,0', 27.5: '' }, data: jitter([31.8, 31.65, 31.6, 31.6, 31.45, 31.4, 31.38, 31.3, 31.32, 31.4], 0.06, 60, 21) },
  airInTop: { ...small, min: 22.15, max: 32, ticks: { 30: '30,0', 27.5: '27,5', 25: '25,0', 22.5: '' }, data: jitter([27, 27.15, 27.3, 26.95, 26.8, 26.95, 26.9, 27, 26.85, 26.95, 26.95], 0.4, 60, 37) },
  airOutTop: { ...small, min: 27.28, max: 37.15, ticks: { 35: '35,0', 32.5: '32,5', 30: '30,0', 27.5: '' }, data: jitter([32.5, 32.4, 32.45, 32.3, 32.15, 32.05, 32, 32, 31.95, 31.95], 0.22, 60, 41) },
  airInSide: { ...small, min: 20.1, max: 30.03, ticks: { 30: '', 27.5: '27,5', 25: '25,0', 22.5: '22,5' }, data: jitter([24.85, 24.8, 25, 24.85, 25.1, 25.35, 25, 24.95, 24.8, 24.85, 25.1], 0.35, 60, 55) },
  airOutSide: { ...small, l: 46, min: 26.65, max: 36.55, ticks: { 35: '35', 30: '30' }, data: jitter([31.7, 31.6, 31.5, 31.5, 31.3, 31.2, 31.2, 31.1, 31.15, 31.2], 0.12, 60, 61) },
  dtWA: { ...small, l: 54, r: 5, t: 8, min: 1.5, max: 11.46, fills: [[0, '#3d4042'], [12, '#3d4042']], ticks: { 10: '10,0', 7.5: '7,5', 5: '5,0', 2.5: '2,5' }, data: jitter([6.8, 6.6, 6.65, 6.3, 6.4, 6.45, 6.4, 6.35, 6.3], 0.35, 70, 71) },
  dtW: { ...small, l: 51, r: 10, min: -2.93, max: 7.04, zero: 0, fills: [[0, '#3d4042'], [12, '#3d4042']], ticks: { 5: '5,0', 2.5: '2,5', 0: '0,0', '-2.5': '' }, data: jitter([2, 2.1, 2, 2.02, 2, 2.03, 2], 0.1, 70, 81) },
  flow: { ...small, l: 58, color: '#000', min: 0, max: 300, fills: [[0, '#f04c40'], [50, '#4d9a40'], [100, '#6b96c8'], [140, '#6b96c8']], ticks: { 300: '', 200: '200', 100: '100', 0: '' }, data: jitter([132, 131, 130, 131, 132, 130, 132, 131, 131], 8, 90, 91) },
  fanTop: { ...fan, min: 0, max: 1670, ticks: { 1500: '1 500', 1250: '1 250', 1000: '1 000', 750: '750', 500: '500', 250: '250', 0: '' }, data: [[0, 1670], [1, 1670]] },
  fanRight: { ...fan, min: 0, max: 1682, ticks: { 1500: '1 500', 1250: '1 250', 1000: '1 000', 750: '750', 500: '500', 250: '250', 0: '' },
    data: pairs([0, 1676, 8, 1678, 20, 1675, 22, 1665, 24, 1676, 26, 1675, 28, 1664, 30, 1674, 36, 1676, 38, 1663, 58, 1662, 59, 1657, 69, 1657, 70, 1672, 71, 1657, 87, 1657, 88, 1672, 88.5, 1657, 98, 1657, 99, 1674, 100, 1657], 100) },
  powerOut: { ...watt, min: 0, max: 333.7, ticks: { 300: '300', 250: '250', 200: '200', 150: '150', 100: '100', 50: '50', 0: '' },
    data: pairs([0, 304, 4, 302, 9, 317, 14, 303, 19, 314, 23, 310, 29, 310, 35, 318, 39, 316, 44, 317, 53, 309, 64, 316, 69, 314, 79, 314, 85, 310, 89, 313, 93, 313, 99, 319, 104, 317, 110, 301, 114, 294, 118, 292, 123, 298, 127, 301, 132, 308, 136, 307, 142, 297, 151, 300, 156, 295, 161, 309, 166, 305, 170, 307, 176, 295, 180, 301, 184, 292, 190, 299, 194, 299, 199, 313, 204, 309, 213, 317, 218, 311, 224, 317, 228, 316, 233, 304, 237, 301, 242, 307, 246, 301, 252, 297, 258, 302, 263, 301, 274, 306, 283, 301, 288, 308, 296, 304, 300, 304, 305, 296, 315, 313, 321, 301, 326, 313, 333, 306, 338, 305, 346, 297, 350, 292, 355, 304], 355) },
  powerCpu: { ...watt, min: 0, max: 200, ticks: { 175: '175', 150: '150', 125: '125', 100: '100', 75: '75', 50: '50', 25: '25', 0: '' }, data: jitter([175.5, 177, 176, 177, 176, 176.5, 175.8, 176.2, 176], 2.6, 66, 101) },
  powerGpu: { ...watt, min: 0, max: 234.5, ticks: { 200: '200', 150: '150', 100: '100', 50: '50', 0: '' },
    data: pairs([0, 234, 10, 233, 19, 233, 23, 179, 28, 200, 34, 232, 40, 232, 47, 231, 53, 229, 57, 232, 62, 212, 72, 189, 78, 229, 83, 234, 88, 231, 93, 233, 97, 196, 102, 232, 107, 231, 112, 209, 117, 203, 122, 233, 129, 190, 134, 234, 138, 231, 144, 196, 149, 217, 156, 208, 163, 190, 172, 189, 178, 217, 183, 231, 188, 229, 192, 225, 201, 189, 207, 221, 211, 232, 220, 190, 225, 220, 231, 204, 240, 193, 244, 192, 248, 234, 254, 223, 261, 188, 266, 212, 271, 196, 280, 231, 284, 189, 289, 187, 294, 206, 301, 189, 306, 233, 311, 233, 318, 230, 322, 226, 327, 215, 333, 227, 338, 234, 343, 234, 346, 229, 355, 229], 355) }
};

function drawPlot(svg, c, id, x0, y0, x1, y1) {
  const w = x1 - x0, h = y1 - y0;
  const Y = v => y1 - (v - c.min) / (c.max - c.min) * h;
  const zero = c.zero === undefined ? y1 : Y(c.zero);
  const defs = add(svg, 'defs', {});
  const grad = add(defs, 'linearGradient', { id, gradientUnits: 'userSpaceOnUse', x1: 0, x2: 0, y1: Y(c.fills[c.fills.length - 1][0]), y2: Y(c.fills[0][0]) });
  const lo = c.fills[0][0], hi = c.fills[c.fills.length - 1][0];
  [...c.fills].reverse().forEach(([v, col]) => add(grad, 'stop', { offset: (hi - v) / (hi - lo), 'stop-color': col }));
  const clip = add(defs, 'clipPath', { id: id + 'c' });
  add(clip, 'rect', { x: x0, y: y0 - 2, width: w, height: h + 2 });
  const line = c.data.map(([x, v]) => (x0 + x * w).toFixed(1) + ' ' + Y(v).toFixed(1)).join('L');
  const g = add(svg, 'g', { 'clip-path': `url(#${id}c)` });
  add(g, 'path', { d: `M${x0} ${zero}L${line}L${x1} ${zero}z`, fill: `url(#${id})`, 'fill-opacity': c.alpha || 1 });
  const ticks = Object.entries(c.ticks);
  const grid = { stroke: '#6470a8', 'stroke-opacity': 0.09, 'stroke-width': 2 };
  ticks.forEach(([v]) => add(g, 'path', { d: `M${x0} ${Y(+v)}H${x1}`, ...grid }));
  for (let f = c.major; f < 1; f += c.step) add(g, 'path', { d: `M${x0 + f * w} ${y0}V${y1}`, ...grid });
  add(g, 'path', { d: 'M' + line, fill: 'none', stroke: '#4a4a4a', 'stroke-width': c.line, 'stroke-linejoin': 'round' });
  let d = `M${x0} ${y0}V${y1}M${x0} ${y1 + 1}H${x1}`;
  ticks.forEach(([v]) => { d += `M${x0 - 8} ${Y(+v)}H${x0}`; });
  const m = c.step / c.minor;
  for (let k = -Math.floor(c.major / m); c.major + k * m < 1; k++) d += `M${x0 + (c.major + k * m) * w} ${y1 + 1}v${k % c.minor ? 6 : 9}`;
  add(svg, 'path', { d, fill: 'none', stroke: c.color, 'stroke-width': 1.5 });
  ticks.forEach(([v, t]) => t && add(svg, 'text', { class: 'axis', x: x0 - 11, y: Y(+v) + 6, 'text-anchor': 'end', fill: c.color }, t));
}

const gauges = {
  cpu: { cx: 263, cy: 305, r: 260, value: 79, lo: 73, hi: 81, base: 136, name: 'CPU', unitY: 146, nameY: 177, box: [148, 110, 416, 192],
    arcs: [[0, 30, '#0000ff'], [30, 50, '#429400'], [50, 80, '#fff200'], [80, 100, '#ff0000']],
    chart: { ...small, color: '#000', min: 71.9, max: 82, line: 2, alpha: 0.8, fills: [[70, '#f8582a'], [76, '#fa3a28'], [82, '#f62e2a']], ticks: { 80: '80', 75: '75' },
      data: pairs([0, 77, 7, 77, 14, 76, 21, 76, 27, 77, 31, 77, 37, 80, 43, 77, 50, 77, 61, 79, 67, 77, 73, 79, 79, 77, 89, 77, 94, 80, 100, 79, 106, 76, 112, 76.5, 121, 78, 126, 78, 132, 77, 139, 77, 147, 79, 154, 76, 159, 77, 164, 77, 173, 78, 178, 77, 184, 79, 190, 77, 197, 76, 204, 77, 212, 77, 218, 76, 224, 80, 232, 79.1, 246, 79, 253, 76, 297, 76, 303, 77, 309, 79, 315, 78, 326, 75, 331, 77, 337, 78, 343, 76, 350, 76, 356, 75, 362, 75, 374, 77, 382, 76, 394, 79, 400, 77, 418, 80, 425, 76, 428, 76], 428) } },
  gpu: { cx: 266, cy: 300, r: 256, value: 40, lo: 38.5, hi: 41, base: 104, name: 'GPU', unitY: 152, nameY: 185, box: [164, 102, 409, 191],
    arcs: [[0, 25, '#0000ff'], [25, 40, '#429400'], [40, 70, '#fff200'], [70, 90, '#ff0000'], [90, 100, '#000']],
    chart: { ...small, color: '#000', min: 34.6, max: 44.4, line: 2, alpha: 0.72, fills: [[34, '#bcd810'], [41, '#fbf612']], ticks: { 40: '40', 35: '' },
      data: pairs([0, 40, 21, 40, 28, 39, 36, 40, 43, 39, 49, 40, 57, 39, 63, 41, 68, 40, 79, 40, 85, 39, 94, 40, 101, 39, 106, 39, 111, 40, 133, 40, 144, 39, 153, 40, 160, 39, 167, 39, 176, 40, 183, 40, 191, 39, 195, 39, 203, 40, 229, 40, 236, 39, 252, 39, 258, 40, 265, 39, 270, 40, 275, 39, 281, 40, 287, 39, 301, 39, 308, 40, 316, 40, 325, 39, 335, 40, 347, 39, 361, 39, 368, 40, 387, 40, 392, 39], 392) } }
};

function drawGauge(svg, g, id) {
  const P = (v, r) => { const a = (v * 1.2 - 60) * Math.PI / 180; return (g.cx + r * Math.sin(a)).toFixed(1) + ' ' + (g.cy - r * Math.cos(a)).toFixed(1); };
  const arc = (a, b, r, w, col) => add(svg, 'path', { d: `M${P(a, r)}A${r} ${r} 0 0 1 ${P(b, r)}`, fill: 'none', stroke: col, 'stroke-width': w });
  g.arcs.forEach(([a, b, col]) => arc(a, b, g.r - 6, 12, col));
  for (let v = 0; v <= 100; v += 5) {
    add(svg, 'path', { d: `M${P(v, g.r)}L${P(v, g.r + (v % 10 ? 7 : 12))}`, stroke: '#000', 'stroke-width': 1.5 });
    if (v % 10 === 0) {
      const [x, y] = P(v, g.r + 19).split(' ');
      add(svg, 'text', { class: 'axis', x, y, 'text-anchor': 'middle', fill: '#222', transform: `rotate(${v * 1.2 - 60} ${x} ${y})` }, v);
    }
  }
  arc(g.lo, g.hi, g.r - 19, 8, '#0000ff');
  add(svg, 'text', { class: 'axis', x: g.cx, y: g.unitY, 'text-anchor': 'middle' }, '°C');
  add(svg, 'text', { class: 'axis', x: g.cx, y: g.nameY, 'text-anchor': 'middle' }, g.name);
  const a = (g.value * 1.2 - 60) * Math.PI / 180, nx = Math.cos(a), ny = Math.sin(a);
  const [tx, ty] = P(g.value, g.r - 8).split(' ').map(Number), [bx, by] = P(g.value, g.base).split(' ').map(Number);
  add(svg, 'path', { fill: '#f00', d: `M${tx - nx * 1.5} ${ty - ny * 1.5}L${tx + nx * 1.5} ${ty + ny * 1.5}L${bx + nx * 5.5} ${by + ny * 5.5}L${bx - nx * 5.5} ${by - ny * 5.5}z` });
  drawPlot(svg, g.chart, id, ...g.box);
}

function drawScope(svg, kind) {
  const text = (x, y, t, fill, anchor = 'start') => add(svg, 'text', { x, y, fill, 'text-anchor': anchor }, t);
  const trace = (d, stroke, w = 1) => add(svg, 'path', { d, fill: 'none', stroke, 'stroke-width': w });
  let d = '';
  if (kind === 'temps') {
    for (let x = 76; x <= 1017; x += 10) d += `M${x}.5 78V163`;
    for (let y = 83; y <= 163; y += 8) d += `M76 ${y}.5H1017`;
    trace(d, '#008000');
    [['#00ffff', 101, 106, 3], ['#a8c0e8', 99, 109, 4], ['#00ff00', 97, 103, 6], ['#c8d8c8', 99, 104, 10], ['#ff40ff', 98, 104, 14]].forEach(([col, a, b, amp], i) => {
      const r = seeded(200 + i * 17);
      let p = '';
      for (let x = 77; x < 1016; x += 3) p += (p ? 'L' : 'M') + x + ' ' + ((x < 526 ? a : b) + r() * amp).toFixed(1);
      trace(p, col);
    });
    trace('M77 119.500h18v-1h398v-1h159v1h256v1h109', '#ffc080');
    trace('M77 131.500h34v-1h180v-1h512v1h36v1h76v1h102', '#ffff00');
    add(svg, 'path', { d: 'M526.500 78V163', stroke: '#fff', 'stroke-dasharray': '4 3' });
    text(69, 85, '100 °C', '#fff', 'end');
    text(69, 170, '0 °C', '#fff', 'end');
    text(526, 186, '2:23:58', '#fff', 'end');
    text(1043, 106, '75', '#ff80ff');
    text(1043, 113, '68', '#00ffff');
    text(1022, 114, '67', '#a8c0e8');
    text(1043, 127, '52', '#ffc080');
    text(1022, 139, '37', '#ffff00');
  } else {
    for (let x = 83; x <= 1057; x += 10) d += `M${x}.5 45V163`;
    for (let y = 53; y <= 163; y += 11) d += `M75 ${y}.5H1057`;
    trace(d, '#008000');
    trace('M77 45.500H503l1 3 1-3H1014l1 5 1-5H1057', '#ffff00');
    trace('M75 163.500H1057', '#00ff00');
    text(69, 51, '100%', '#fff', 'end');
    text(69, 169, '0%', '#fff', 'end');
    text(1062, 51, '100%', '#ffff00');
    text(1062, 169, '0%', '#00ff00');
  }
}

function render() {
  document.querySelectorAll('[data-chart],[data-gauge],[data-scope]').forEach(el => {
    el.querySelector(':scope > svg')?.remove();
    const w = el.clientWidth, h = el.clientHeight;
    const svg = add(el, 'svg', { width: w, height: h });
    const { chart, gauge, scope } = el.dataset;
    if (chart) { const c = charts[chart]; drawPlot(svg, c, 'g-' + chart, c.l, c.t, w - c.r, h - c.b); }
    if (gauge) drawGauge(svg, gauges[gauge], 'g-' + gauge);
    if (scope) drawScope(svg, scope);
  });
}
render();
addEventListener('resize', render);
```
